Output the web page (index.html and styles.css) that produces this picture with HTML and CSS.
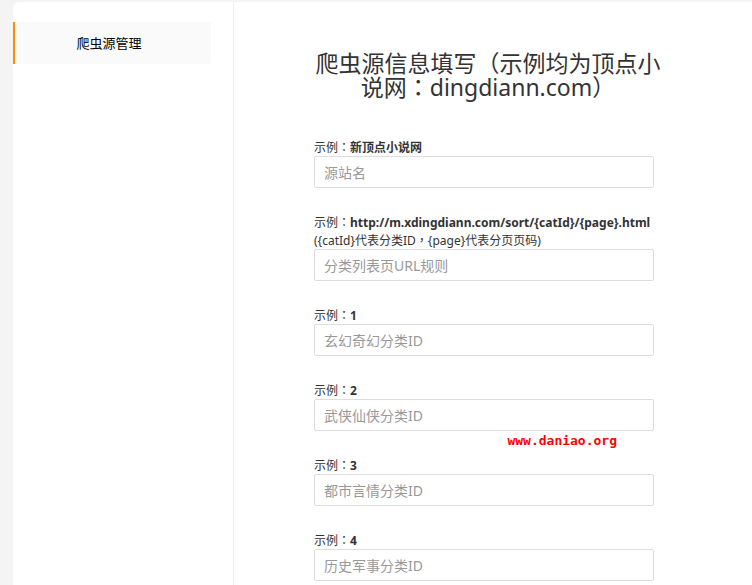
FILE: index.html
```html
<!DOCTYPE html>
<html lang="zh-CN">
<head>
<meta charset="utf-8">
<title>爬虫源管理</title>
<link rel="stylesheet" href="styles.css">
</head>
<body>
<div class="panel">
  <nav class="sidebar">
    <a class="nav-item" href="#source">爬虫源管理</a>
  </nav>
  <main class="content">
    <form class="source-form">
      <h1 class="title">爬虫源信息填写<span class="mark" lang="zh-TW">（</span>示例均为顶点小说网<span class="mark" lang="zh-TW">：</span>dingdiann.com<span class="mark" lang="zh-TW">）</span></h1>
      <div class="field">
        <label for="name">示例<span class="mark" lang="zh-TW">：</span><b>新顶点小说网</b></label>
        <input id="name" type="text" placeholder="源站名">
      </div>
      <div class="field">
        <label for="rule">示例<span class="mark" lang="zh-TW">：</span><b>http://m.xdingdiann.com/sort/{catId}/{page}.html</b><br>({catId}代表分类ID<span class="mark" lang="zh-TW">，</span>{page}代表分页页码)</label>
        <input id="rule" type="text" placeholder="分类列表页URL规则">
      </div>
      <div class="field">
        <label for="cat1">示例<span class="mark" lang="zh-TW">：</span><b>1</b></label>
        <input id="cat1" type="text" placeholder="玄幻奇幻分类ID">
      </div>
      <div class="field">
        <label for="cat2">示例<span class="mark" lang="zh-TW">：</span><b>2</b></label>
        <input id="cat2" type="text" placeholder="武侠仙侠分类ID">
        <span class="watermark">www.daniao.org</span>
      </div>
      <div class="field">
        <label for="cat3">示例<span class="mark" lang="zh-TW">：</span><b>3</b></label>
        <input id="cat3" type="text" placeholder="都市言情分类ID">
      </div>
      <div class="field">
        <label for="cat4">示例<span class="mark" lang="zh-TW">：</span><b>4</b></label>
        <input id="cat4" type="text" placeholder="历史军事分类ID">
      </div>
    </form>
  </main>
</div>
</body>
</html>
```
FILE: styles.css
```css
* {
  box-sizing: border-box;
}

body {
  margin: 0;
  padding: 2px 0 0 13px;
  background: #f4f4f4;
  color: #333;
  font: 12px/18px "Noto Sans", "Noto Sans CJK SC", sans-serif;
}

.panel {
  display: flex;
  min-height: calc(100vh - 2px);
  background: #fff;
  border-top-left-radius: 6px;
}

.sidebar {
  flex: 0 0 221px;
  padding: 20px 22px 0 0;
  border-right: 1px solid #eee;
}

.nav-item {
  display: block;
  padding-right: 8px;
  border-left: 2px solid #ff8c00;
  border-radius: 0 2px 2px 0;
  background: #fafafa;
  color: #000;
  font-size: 13px;
  line-height: 42px;
  text-align: center;
  text-decoration: none;
}

.content {
  flex: 1;
  min-width: 0;
  padding: 49px 80px 4px;
}

.source-form {
  max-width: 348px;
}

.title {
  margin: 0 0 40px;
  font-size: 23px;
  font-weight: 400;
  line-height: 24px;
  text-align: center;
}

/* Full-width punctuation centred in its cell */
.mark {
  font-family: "Noto Sans CJK TC", sans-serif;
  line-height: 1;
}

.field {
  position: relative;
  max-width: 340px;
}

.field + .field {
  margin-top: 26px;
}

.field label {
  display: block;
  margin-bottom: -1px;
  white-space: nowrap;
}

.field input {
  display: block;
  width: 100%;
  height: 32px;
  padding: 0 9px;
  border: 1px solid #ddd;
  border-radius: 2px;
  background: #fff;
  color: #333;
  font: inherit;
  font-size: 14px;
}

.field input::placeholder {
  color: #999;
  opacity: 1;
}

.watermark {
  position: absolute;
  top: 100%;
  right: 37px;
  color: #f00;
  font: bold 13px/20px "DejaVu Sans Mono", monospace;
}
```
